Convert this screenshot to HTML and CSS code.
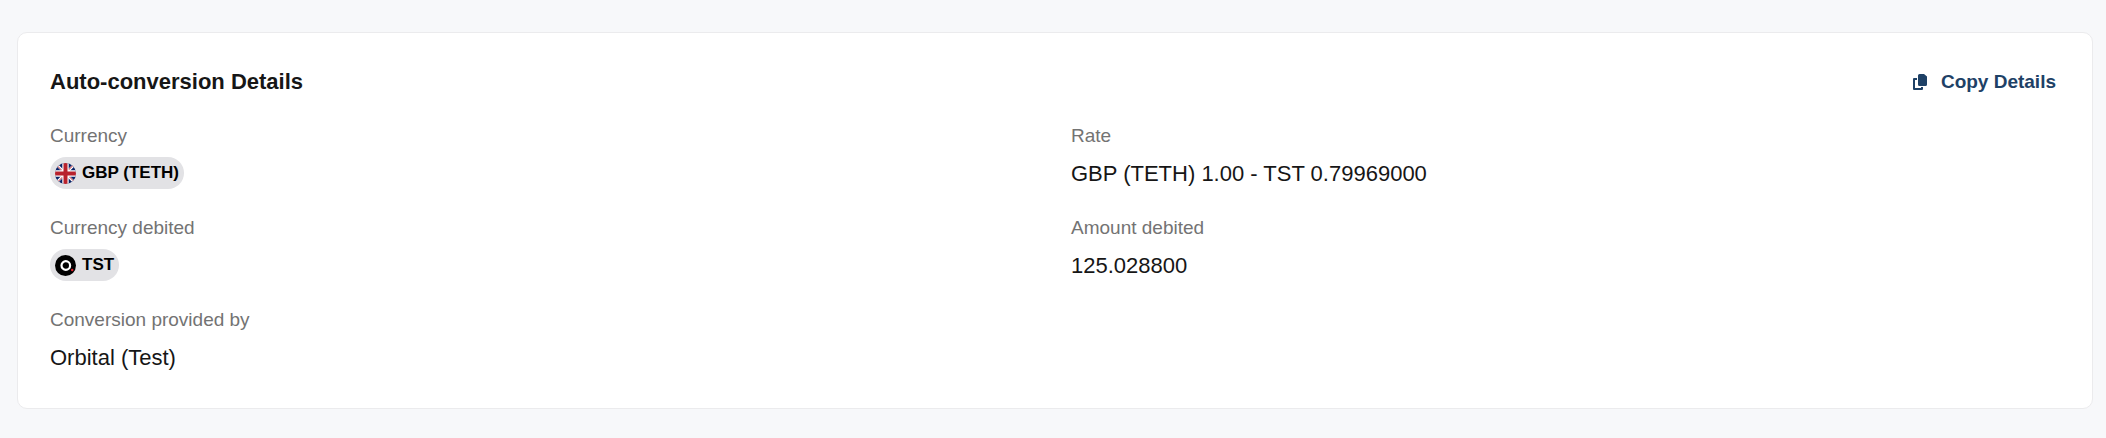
FILE: index.html
```html
<!DOCTYPE html>
<html lang="en">
<head>
<meta charset="utf-8">
<meta name="viewport" content="width=device-width, initial-scale=1">
<title>Auto-conversion Details</title>
<link rel="stylesheet" href="styles.css">
</head>
<body>
<section class="card">
  <header class="card-header">
    <h2 class="card-title">Auto-conversion Details</h2>
    <button class="copy-button" type="button">
      <svg class="copy-icon" viewBox="0 0 14 16" aria-hidden="true">
        <path d="M6.500 0H11l3 2.600V10.500a1.500 1.500 0 0 1-1.500 1.500h-6A1.500 1.500 0 0 1 5 10.500v-9A1.500 1.500 0 0 1 6.500 0Z" fill="currentColor"/>
        <path d="M4 5H1v10h8v-2" fill="none" stroke="currentColor" stroke-width="2" stroke-linejoin="round"/>
      </svg>
      <span>Copy Details</span>
    </button>
  </header>
  <dl class="details">
    <div class="field">
      <dt class="label">Currency</dt>
      <dd class="value">
        <span class="pill">
          <svg class="pill-icon" viewBox="0 0 21 21" aria-hidden="true">
            <defs><clipPath id="disc"><circle cx="10.500" cy="10.500" r="10.500"/></clipPath></defs>
            <g clip-path="url(#disc)">
              <path fill="#0a2468" d="M0 0h21v21H0z"/>
              <path d="M0 0l21 21M21 0L0 21" stroke="#fff" stroke-width="2.600"/>
              <path d="M0 .6l8 8M13 12.400l8 8M20.400 0l-8 8M8.600 13l-8 8" stroke="#b8222d" stroke-width="1"/>
              <path d="M10.500 0v21M0 10.500h21" stroke="#fff" stroke-width="6.400"/>
              <path d="M10.500 0v21M0 10.500h21" stroke="#b8222d" stroke-width="4"/>
            </g>
          </svg>
          <span>GBP (TETH)</span>
        </span>
      </dd>
    </div>
    <div class="field">
      <dt class="label">Rate</dt>
      <dd class="value">GBP (TETH) 1.00 - TST 0.79969000</dd>
    </div>
    <div class="field">
      <dt class="label">Currency debited</dt>
      <dd class="value">
        <span class="pill">
          <svg class="pill-icon" viewBox="0 0 21 21" aria-hidden="true">
            <circle cx="10.500" cy="10.500" r="10.500" fill="#000"/>
            <circle cx="10.800" cy="10.500" r="4.300" fill="none" stroke="#fff" stroke-width="2.200"/>
            <circle cx="17.200" cy="15" r="1.200" fill="#e5202c"/>
          </svg>
          <span>TST</span>
        </span>
      </dd>
    </div>
    <div class="field">
      <dt class="label">Amount debited</dt>
      <dd class="value">125.028800</dd>
    </div>
    <div class="field">
      <dt class="label">Conversion provided by</dt>
      <dd class="value">Orbital (Test)</dd>
    </div>
  </dl>
</section>
</body>
</html>
```
FILE: styles.css
```css
* {
  box-sizing: border-box;
}

body {
  margin: 0;
  padding: 32px 13px 28px 17px;
  background: #f7f8fa;
  color: #161616;
  font-family: "Liberation Sans", Arial, sans-serif;
}

.card {
  padding: 32px 32px 33px;
  background: #fff;
  border: 1px solid #ebebed;
  border-radius: 10px;
}

.card-header {
  display: flex;
  align-items: center;
  justify-content: space-between;
  margin-bottom: 22px;
}

.card-title {
  margin: 0;
  font-size: 22px;
  font-weight: 700;
  line-height: 34px;
}

.copy-button {
  display: flex;
  align-items: center;
  gap: 14px;
  padding: 0 4px;
  border: 0;
  background: none;
  color: #1e4166;
  font: 700 19px/34px "Liberation Sans", Arial, sans-serif;
  cursor: pointer;
}

.copy-icon {
  width: 14px;
  height: 16px;
}

.details {
  display: grid;
  grid-template-columns: 1fr 1fr;
  gap: 22px 32px;
  margin: 0;
}

.field {
  display: flex;
  flex-direction: column;
  gap: 6px;
}

.label {
  color: #737373;
  font-size: 19px;
  line-height: 30px;
}

.value {
  display: flex;
  align-items: flex-start;
  margin: 0;
  font-size: 22px;
  line-height: 34px;
}

.pill {
  display: flex;
  align-items: center;
  gap: 6px;
  padding: 0 5px;
  border-radius: 16px;
  background: #e2e2e5;
  color: #000;
  font-size: 17px;
  font-weight: 700;
  line-height: 32px;
}

.pill-icon {
  width: 21px;
  height: 21px;
}
```
